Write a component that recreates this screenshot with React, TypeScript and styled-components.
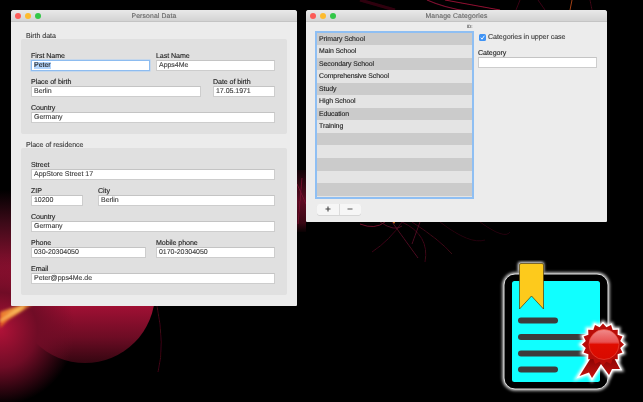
import React from "react";
import styled, { createGlobalStyle } from "styled-components";

const Global = createGlobalStyle`
  html, body { margin: 0; padding: 0; background: #000; }
  * { box-sizing: border-box; }
`;

const Desktop = styled.div`
  position: relative;
  width: 643px;
  height: 402px;
  overflow: hidden;
  background: #000;
  font-family: "Liberation Sans", Arial, sans-serif;
  text-rendering: geometricPrecision;
  -webkit-text-stroke: 0.12px;
`;

const WallpaperSvg = styled.svg`
  position: absolute;
  inset: 0;
`;

const AppIconSvg = styled.svg`
  position: absolute;
  left: 490px;
  top: 250px;
`;

const Window = styled.section<{ $x: number; $w: number; $h: number }>`
  position: absolute;
  left: ${(p) => p.$x}px;
  top: 10px;
  width: ${(p) => p.$w}px;
  height: ${(p) => p.$h}px;
  background: #ececec;
  border-radius: 3px 3px 1px 1px;
  display: flex;
  flex-direction: column;
  filter: blur(0.35px);
  will-change: transform, filter;
`;

const TitleBar = styled.header`
  position: relative;
  flex: 0 0 12px;
  display: flex;
  align-items: center;
  justify-content: center;
  padding-top: 1px;
  background: linear-gradient(#e9e9e9, #d3d3d3);
  border-bottom: 1px solid #c4c4c4;
  border-radius: 3px 3px 0 0;
  font-size: 6.8px;
  letter-spacing: 0.15px;
  color: #666;
`;

const Lights = styled.div`
  position: absolute;
  left: 4px;
  top: 3px;
  display: flex;
  gap: 4px;
`;

const Light = styled.span<{ $c: string }>`
  width: 6px;
  height: 6px;
  border-radius: 50%;
  background: ${(p) => p.$c};
`;

const FormBody = styled.div`
  padding: 9px 10px 0;
`;

const SectionTitle = styled.h2`
  margin: 0 0 0 5px;
  height: 8px;
  line-height: 10px;
  font-size: 7.1px;
  letter-spacing: -0.05px;
  font-weight: 400;
  color: #3c3c3c;
`;

const Panel = styled.div`
  background: #e0e0e0;
  border-radius: 2px;
  padding: 11px 12px 11px 10px;
  margin-bottom: 6px;
  display: flex;
  flex-direction: column;
  gap: 5px;
`;

const Row = styled.div<{ $cols: string; $gap?: number }>`
  display: grid;
  grid-template-columns: ${(p) => p.$cols};
  column-gap: ${(p) => p.$gap ?? 0}px;
`;

const Field = styled.div`
  display: flex;
  flex-direction: column;
`;

const Label = styled.label`
  height: 10px;
  line-height: 12px;
  font-size: 7.1px;
  letter-spacing: -0.08px;
  color: #222;
`;

const Input = styled.div<{ $focus?: boolean }>`
  height: 11px;
  line-height: 9.5px;
  padding-left: 2px;
  background: #fff;
  border: 1px solid ${(p) => (p.$focus ? "#8dbcf0" : "#cdcdcd")};
  border-top-color: ${(p) => (p.$focus ? "#8dbcf0" : "#c4c4c4")};
  box-shadow: ${(p) => (p.$focus ? "0 0 0 0.5px #a9cdf5" : "none")};
  font-size: 7px;
  letter-spacing: -0.03px;
  color: #3c3c3c;
  white-space: nowrap;
  overflow: hidden;
`;

const Selected = styled.span`
  background: #b4d5fb;
  color: #222;
`;

const ManagerBody = styled.div`
  flex: 1;
  display: flex;
  padding: 0 10px 0 9px;
`;

const ListColumn = styled.div`
  flex: 0 0 158.5px;
  display: flex;
  flex-direction: column;
`;

const ColumnHeader = styled.div`
  height: 8.5px;
  padding: 2px 1px 0 0;
  line-height: 6px;
  text-align: right;
  font-size: 4.5px;
  color: #555;
`;

const ListBox = styled.div`
  height: 168px;
  padding: 0 0 1.5px;
  border: 2px solid #8fbff3;
  background: #e4e4e4;
  overflow: hidden;
`;

const ListRow = styled.div<{ $odd: boolean }>`
  height: 12.55px;
  line-height: 14px;
  padding-left: 2px;
  background: ${(p) => (p.$odd ? "#cbcbcb" : "#e4e4e4")};
  font-size: 6.9px;
  letter-spacing: -0.06px;
  color: #222;
`;

const ButtonGroup = styled.div`
  margin: 5.5px 0 0 2px;
  width: 44px;
  height: 10.5px;
  display: flex;
  background: #f6f6f6;
  border-radius: 2px;
  box-shadow: 0 0.5px 0.5px #c2c2c2;
`;

const SegButton = styled.button`
  flex: 1;
  padding: 0;
  border: 0;
  border-right: 1px solid #dcdcdc;
  background: none;
  display: flex;
  align-items: center;
  justify-content: center;
  &:last-child { border-right: 0; }
`;

const SidePanel = styled.div`
  flex: 1;
  padding: 11.5px 0 0 4.5px;
  display: flex;
  flex-direction: column;
`;

const CheckRow = styled.div`
  display: flex;
  align-items: center;
  height: 7px;
  padding-left: 0.5px;
  gap: 2.5px;
  font-size: 7.1px;
  letter-spacing: -0.06px;
  color: #3c3c3c;
  white-space: nowrap;
`;

const CheckBox = styled.span`
  flex: 0 0 7px;
  height: 7px;
  border-radius: 1.5px;
  background: #3f93f5;
  display: flex;
`;

const CategoryField = styled(Field)`
  margin-top: 6.5px;
`;

const sealPoints = (() => {
  const pts: string[] = [];
  const n = 16;
  for (let i = 0; i < n * 2; i++) {
    const r = i % 2 ? 17.5 : 21;
    const a = (i * Math.PI) / n;
    pts.push(`${(603 + r * Math.cos(a)).toFixed(1)},${(344.5 + r * Math.sin(a)).toFixed(1)}`);
  }
  return pts.join(" ");
})();

const ribbon = "M592 356 L579.5 376 L589 372.5 L592 378 L601 364 L609 375 L612 369 L620 369 L612 354Z";

function Wallpaper() {
  return (
    <WallpaperSvg width="643" height="402" viewBox="0 0 643 402">
      <defs>
        <linearGradient id="sph" x1="0" y1="306" x2="0" y2="364" gradientUnits="userSpaceOnUse">
          <stop offset="0" stopColor="#a01034" />
          <stop offset="0.55" stopColor="#6c0c24" />
          <stop offset="1" stopColor="#320610" />
        </linearGradient>
        <linearGradient id="left" x1="0" y1="0" x2="0" y2="1">
          <stop offset="0" stopColor="#000" />
          <stop offset="0.25" stopColor="#3c0a18" />
          <stop offset="0.6" stopColor="#8c1030" />
          <stop offset="0.75" stopColor="#a41236" />
          <stop offset="1" stopColor="#a41236" />
        </linearGradient>
        <radialGradient id="below" cx="0" cy="330" r="75" gradientUnits="userSpaceOnUse">
          <stop offset="0" stopColor="#b01238" />
          <stop offset="0.5" stopColor="#700c26" />
          <stop offset="1" stopColor="#700c26" stopOpacity="0" />
        </radialGradient>
        <linearGradient id="gap" x1="0" y1="170" x2="0" y2="232" gradientUnits="userSpaceOnUse">
          <stop offset="0" stopColor="#100205" />
          <stop offset="0.5" stopColor="#5c0c22" />
          <stop offset="0.85" stopColor="#3a0714" />
          <stop offset="1" stopColor="#080102" />
        </linearGradient>
        <linearGradient id="flare" x1="0" y1="1" x2="1" y2="0">
          <stop offset="0" stopColor="#e85a20" />
          <stop offset="0.6" stopColor="#f0a040" />
          <stop offset="1" stopColor="#c04818" />
        </linearGradient>
        <filter id="soft"><feGaussianBlur stdDeviation="1.5" /></filter>
        <filter id="thin"><feGaussianBlur stdDeviation="0.5" /></filter>
      </defs>
      <rect x="0" y="190" width="14" height="130" fill="url(#left)" />
      <circle cx="85" cy="293" r="70" fill="url(#sph)" />
      <rect x="0" y="255" width="80" height="147" fill="url(#below)" />
      <path d="M0 312 L30 302 L36 302 L8 320 L0 328Z" fill="url(#flare)" filter="url(#soft)" />
      <path d="M0 321 L24 306" stroke="#ffd070" strokeWidth="1.5" filter="url(#soft)" />
      <path d="M157 306 Q165 345 158 372" stroke="#3c0814" strokeWidth="1" fill="none" filter="url(#thin)" />
      <rect x="297" y="170" width="9" height="62" fill="url(#gap)" />
      <path d="M297 184 L306 204 M302 178 L298 224" stroke="#7c1030" strokeWidth="0.8" fill="none" filter="url(#thin)" />
      <g strokeWidth="0.8" fill="none" filter="url(#thin)" stroke="#4a0a1c">
        <path d="M402 222 Q430 235 425 262" />
        <path d="M402 222 Q390 240 372 252" />
        <path d="M412 222 Q440 240 452 254" />
        <path d="M360 224 Q375 230 385 222" stroke="#8a1232" />
        <path d="M480 222 Q505 240 510 232" stroke="#2e0610" />
        <path d="M440 222 Q470 245 485 240" stroke="#2e0610" />
        <path d="M380 222 Q395 232 402 226 M420 222 L412 244 M392 222 L418 258" stroke="#5c0e26" />
      </g>
      <g fill="none" filter="url(#thin)">
        <path d="M427 0 Q445 8 467 11" stroke="#7c1030" strokeWidth="1.2" />
        <path d="M445 0 L500 10" stroke="#8c1030" strokeWidth="1.2" />
        <path d="M360 0 L395 10" stroke="#2e0610" strokeWidth="3" />
        <path d="M520 0 L516 10 M538 0 L545 10" stroke="#3a0714" strokeWidth="1" />
        <path d="M572 0 L570 10" stroke="#c8501c" strokeWidth="0.8" />
        <path d="M590 0 L592 10" stroke="#3a0714" strokeWidth="1" />
      </g>
      <circle cx="394" cy="222.5" r="0.9" fill="#e08020" />
    </WallpaperSvg>
  );
}

function AppIcon() {
  return (
    <AppIconSvg width="153" height="152" viewBox="490 250 153 152">
      <defs>
        <filter id="glow" x="-20%" y="-20%" width="140%" height="140%">
          <feGaussianBlur stdDeviation="1.8" />
        </filter>
        <linearGradient id="ball" x1="0" y1="0" x2="0" y2="1">
          <stop offset="0" stopColor="#f08a8a" />
          <stop offset="0.42" stopColor="#e85050" />
          <stop offset="0.5" stopColor="#e00c00" />
          <stop offset="1" stopColor="#d80a00" />
        </linearGradient>
        <linearGradient id="rib" x1="0" y1="0" x2="0" y2="1">
          <stop offset="0" stopColor="#7c0000" />
          <stop offset="1" stopColor="#c81410" />
        </linearGradient>
      </defs>
      <rect x="504" y="274" width="104" height="115" rx="11" fill="none" stroke="#e8e8e8" strokeWidth="3" filter="url(#glow)" />
      <rect x="504" y="274" width="104" height="115" rx="11" fill="#000" stroke="#dedede" strokeWidth="1" />
      <path d="M518 272 V264 Q518 262 520 262 H542 Q544 262 544 264 V272Z" fill="#fff" filter="url(#glow)" />
      <rect x="512" y="281" width="88" height="101" rx="2.5" fill="#10ffff" />
      <path d="M519.5 265 Q519.5 263.5 521 263.5 H542 Q543.5 263.5 543.5 265 V309 L531.5 296 L519.5 309Z" fill="#fdca1c" stroke="#4a3a08" strokeWidth="0.7" />
      <g stroke="#3c3c3c" strokeWidth="6" strokeLinecap="round">
        <path d="M521 320.5 H555" />
        <path d="M521 337 H590" />
        <path d="M521 353.5 H590" />
        <path d="M521 369.5 H555" />
      </g>
      <g filter="url(#glow)" fill="#fff" stroke="#fff" strokeWidth="5">
        <polygon points={sealPoints} />
        <path d={ribbon} />
      </g>
      <polygon points={sealPoints} fill="#fff" stroke="#fff" strokeWidth="2.5" />
      <path d={ribbon} fill="#fff" stroke="#fff" strokeWidth="2.5" />
      <path d={ribbon} fill="url(#rib)" />
      <polygon points={sealPoints} fill="#b80c08" />
      <circle cx="604" cy="344.5" r="15" fill="url(#ball)" stroke="#f05040" strokeWidth="0.6" />
    </AppIconSvg>
  );
}

const categories = ["Primary School", "Main School", "Secondary School", "Comprehensive School", "Study", "High School", "Education", "Training", "", "", "", "", ""];

function TrafficLights() {
  return (
    <Lights>
      <Light $c="#fc5b57" />
      <Light $c="#fdbb2e" />
      <Light $c="#33c748" />
    </Lights>
  );
}

function TextField({ label, value, focus }: { label: string; value: React.ReactNode; focus?: boolean }) {
  return (
    <Field>
      <Label>{label}</Label>
      <Input $focus={focus}>{value}</Input>
    </Field>
  );
}

export default function App() {
  return (
    <Desktop>
      <Global />
      <Wallpaper />
      <Window $x={11} $w={286} $h={296}>
        <TitleBar>
          <TrafficLights />
          Personal Data
        </TitleBar>
        <FormBody>
          <SectionTitle>Birth data</SectionTitle>
          <Panel>
            <Row $cols="119px 119px" $gap={6}>
              <TextField label="First Name" value={<Selected>Peter</Selected>} focus />
              <TextField label="Last Name" value="Apps4Me" />
            </Row>
            <Row $cols="170px 62px" $gap={12}>
              <TextField label="Place of birth" value="Berlin" />
              <TextField label="Date of birth" value="17.05.1971" />
            </Row>
            <TextField label="Country" value="Germany" />
          </Panel>
          <SectionTitle>Place of residence</SectionTitle>
          <Panel>
            <TextField label="Street" value="AppStore Street 17" />
            <Row $cols="52px 177px" $gap={15}>
              <TextField label="ZIP" value="10200" />
              <TextField label="City" value="Berlin" />
            </Row>
            <TextField label="Country" value="Germany" />
            <Row $cols="115px 119px" $gap={10}>
              <TextField label="Phone" value="030-20304050" />
              <TextField label="Mobile phone" value="0170-20304050" />
            </Row>
            <TextField label="Email" value="Peter@pps4Me.de" />
          </Panel>
        </FormBody>
      </Window>
      <Window $x={306} $w={301} $h={212}>
        <TitleBar>
          <TrafficLights />
          Manage Categories
        </TitleBar>
        <ManagerBody>
          <ListColumn>
            <ColumnHeader>ID:</ColumnHeader>
            <ListBox>
              {categories.map((c, i) => (
                <ListRow key={i} $odd={i % 2 === 0}>{c}</ListRow>
              ))}
            </ListBox>
            <ButtonGroup>
              <SegButton aria-label="Add">
                <svg width="6" height="6" viewBox="0 0 6 6"><path d="M3 .5v5M.5 3h5" stroke="#444" strokeWidth="1.1" /></svg>
              </SegButton>
              <SegButton aria-label="Remove">
                <svg width="6" height="6" viewBox="0 0 6 6"><path d="M.5 3h5" stroke="#666" strokeWidth="1.1" /></svg>
              </SegButton>
            </ButtonGroup>
          </ListColumn>
          <SidePanel>
            <CheckRow>
              <CheckBox>
                <svg width="7" height="7" viewBox="0 0 7 7"><path d="M1.8 3.6 3 5.2 5.3 1.8" fill="none" stroke="#fff" strokeWidth="0.9" /></svg>
              </CheckBox>
              Categories in upper case
            </CheckRow>
            <CategoryField>
              <Label>Category</Label>
              <Input />
            </CategoryField>
          </SidePanel>
        </ManagerBody>
      </Window>
      <AppIcon />
    </Desktop>
  );
}
